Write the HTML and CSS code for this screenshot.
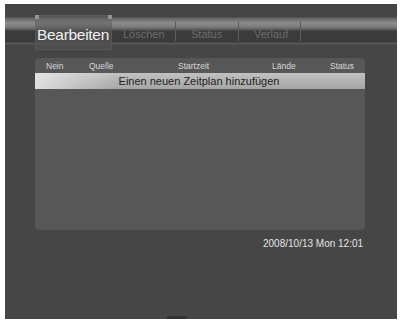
FILE: index.html
```html
<!DOCTYPE html>
<html>
<head>
<meta charset="utf-8">
<link rel="stylesheet" href="styles.css">
</head>
<body>
<div class="screen">
  <div class="header">
    <div class="tab active"><span class="c l"></span><span class="c r"></span>Bearbeiten</div>
    <div class="tab t1">Löschen</div>
    <div class="sep"></div>
    <div class="tab t2">Status</div>
    <div class="sep"></div>
    <div class="tab t3">Verlauf</div>
    <div class="sep"></div>
  </div>
  <div class="panel">
    <div class="cols">
      <span>Nein</span><span>Quelle</span><span>Startzeit</span><span>Lände</span><span>Status</span>
    </div>
    <div class="row-sel">Einen neuen Zeitplan hinzufügen</div>
  </div>
  <div class="date">2008/10/13 Mon 12:01</div>
  <div class="foot"><span class="bump"></span></div>
</div>
</body>
</html>
```
FILE: styles.css
```css
html, body { margin: 0; padding: 0; background: #fff; }
body { font-family: "Liberation Sans", Arial, sans-serif; }
.screen {
  margin: 4px 0 0 5px;
  width: 392px;
  height: 315px;
  background: #464646;
  display: flex;
  flex-direction: column;
}
.header {
  height: 47px;
  display: flex;
  align-items: flex-start;
  padding-left: 30px;
  box-sizing: border-box;
  background: linear-gradient(to bottom,
    #454545 0, #454545 13px,
    #626262 14px, #8c8c8c 19px, #7a7a7a 23px, #555 26px,
    #3b3b3b 27px, #3b3b3b 38px,
    #575757 39px, #575757 40px,
    #464646 41px);
}
.tab {
  height: 35px;
  margin-top: 11px;
  display: flex;
  align-items: center;
  font-size: 11px;
  color: #6c6c6c;
  box-sizing: border-box;
  padding-top: 3px;
}
.tab.active {
  position: relative;
  width: 77px;
  padding-left: 2px;
  padding-top: 4px;
  font-size: 15.5px;
  color: #f0f0f0;
  letter-spacing: -0.3px;
  background: linear-gradient(to bottom, rgba(110,110,110,0.45), rgba(88,88,88,0.65) 40%, rgba(80,80,80,0.75));
  box-shadow: inset 0 0 0 1px rgba(100,100,100,0.4);
}
.c { position: absolute; top: 0; width: 4px; height: 4px; background: #949494; }
.c.l { left: 0; }
.c.r { right: 0; }
.t1 { width: 63px; padding-left: 11px; }
.t2 { width: 62px; padding-left: 15px; }
.t3 { width: 61px; padding-left: 15px; }
.sep {
  width: 1px;
  height: 19px;
  margin-top: 18px;
  background: #5c5c5c;
}
.panel {
  margin: 7px 0 0 30px;
  width: 330px;
  height: 172px;
  background: #575757;
  border-radius: 4px;
  overflow: hidden;
}
.cols {
  height: 14px;
  display: grid;
  grid-template-columns: 43px 89px 94px 58px auto;
  padding-left: 11px;
  align-items: center;
  font-size: 8.5px;
  color: #d8d8d8;
  padding-top: 1px;
  box-sizing: border-box;
}
.row-sel {
  height: 16px;
  margin-top: 1px;
  display: flex;
  align-items: center;
  justify-content: center;
  font-size: 11px;
  color: #1e1e1e;
  padding-right: 2px;
  background:
    linear-gradient(to right, rgba(235,235,235,0.8), rgba(200,200,200,0) 25%),
    linear-gradient(to bottom, #c2c2c2, #b2b2b2 50%, #a6a6a6);
}
.date {
  margin: 8px 0 0 258px;
  font-size: 10px;
  color: #e4e4e4;
}
.foot {
  margin-top: auto;
  height: 3px;
  padding-left: 162px;
}
.bump {
  display: block;
  width: 20px;
  height: 3px;
  background: #333;
}
```
